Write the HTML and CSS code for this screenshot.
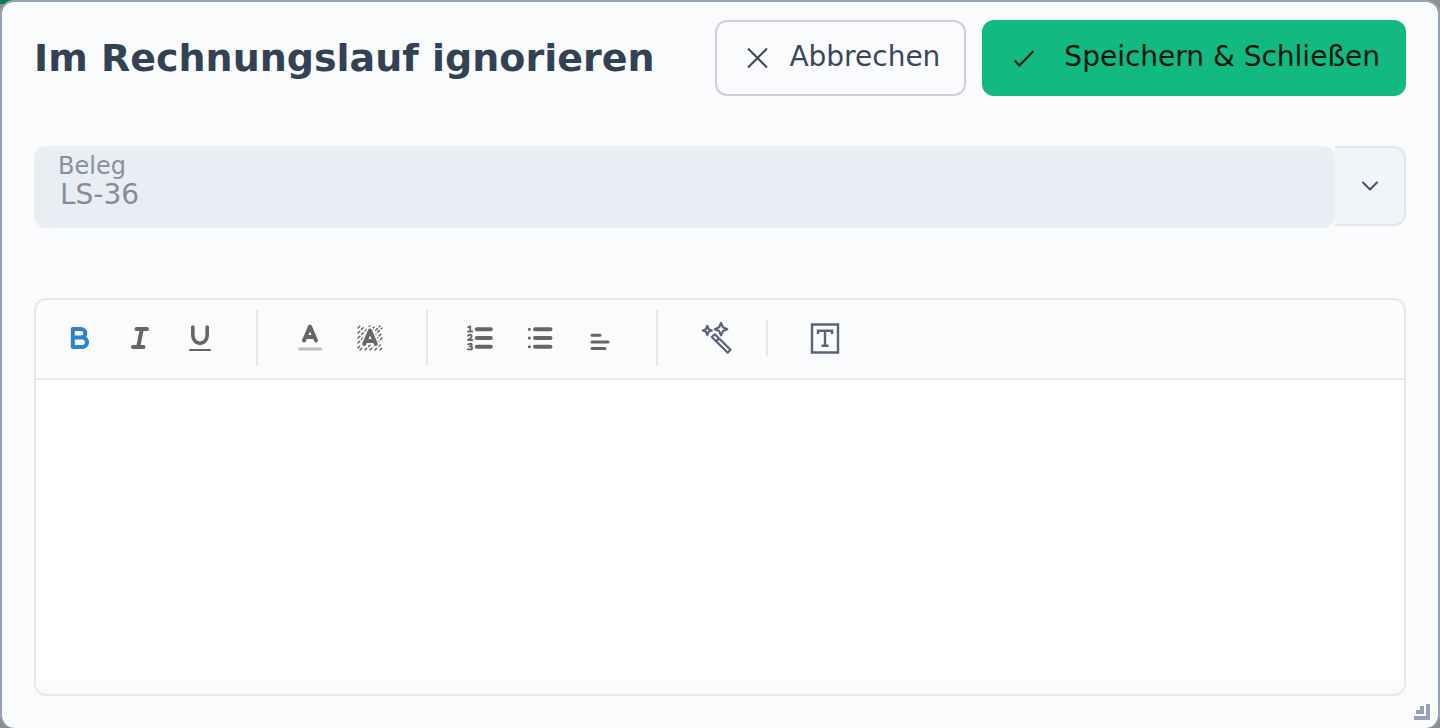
FILE: index.html
```html
<!DOCTYPE html>
<html lang="de">
<head>
<meta charset="utf-8">
<meta name="viewport" content="width=device-width, initial-scale=1">
<title>Im Rechnungslauf ignorieren</title>
<link rel="stylesheet" href="styles.css">
</head>
<body>
<main class="dialog">
  <header class="header">
    <h1 class="title">Im Rechnungslauf ignorieren</h1>
    <div class="actions">
      <button class="btn btn-cancel" type="button">
        <svg class="btn-icon" viewBox="0 0 32 32" aria-hidden="true"><path d="M7 6.500l19 19M26 6.500l-19 19"/></svg>
        Abbrechen
      </button>
      <button class="btn btn-save" type="button">
        <svg class="btn-icon" viewBox="0 0 32 32" aria-hidden="true"><path d="M6.500 18.500l5 5L25.500 9"/></svg>
        Speichern &amp; Schließen
      </button>
    </div>
  </header>

  <div class="combo">
    <div class="field">
      <label class="field-label" for="beleg">Beleg</label>
      <input class="field-input" id="beleg" type="text" value="LS-36" disabled>
    </div>
    <button class="combo-toggle" type="button" aria-label="Auswahl öffnen">
      <svg class="chevron" viewBox="0 0 20 20" aria-hidden="true"><path d="M3 6.500l7 7 7-7"/></svg>
    </button>
  </div>

  <section class="editor">
    <div class="toolbar" role="toolbar" aria-label="Formatierung">
      <div class="group">
        <button class="tool tool-active" type="button" aria-label="Fett">
          <svg class="tool-icon" viewBox="0 0 40 40"><path class="w4" d="M12.800 11h8.200a4.300 4.300 0 0 1 0 8.600h-8.200zM12.800 19.600h9.500a4.700 4.700 0 0 1 0 9.400h-9.500z"/></svg>
        </button>
        <button class="tool" type="button" aria-label="Kursiv">
          <svg class="tool-icon" viewBox="0 0 40 40"><path class="w4" d="M16.500 11h10.500M13 29h10.500M21.800 11l-3.600 18"/></svg>
        </button>
        <button class="tool" type="button" aria-label="Unterstrichen">
          <svg class="tool-icon" viewBox="0 0 40 40"><path class="u-stem" d="M12.800 9v8.500a7.200 7.900 0 0 0 14.400 0V9"/><path class="w2" d="M10 32h20"/></svg>
        </button>
      </div>
      <span class="divider"></span>
      <div class="group">
        <button class="tool" type="button" aria-label="Textfarbe">
          <svg class="tool-icon" viewBox="0 0 40 40"><path class="w4" d="M14 22.500l6-14 6 14M16 19h8"/><path class="w3 swatch" d="M9.500 31h21"/></svg>
        </button>
        <button class="tool" type="button" aria-label="Hintergrundfarbe">
          <svg class="tool-icon" viewBox="0 0 40 40">
            <path class="hatch" d="M8 10l2-2M8 15l7-7M8 20L20 8M8 25L25 8M8 30L30 8M10 32L32 10M15 32l17-17M20 32l12-12M25 32l7-7M30 32l2-2"/>
            <path class="halo" d="M14.200 26l5.800-13.500 5.800 13.500M16 23h8"/>
            <path class="w4" d="M14.200 26l5.800-13.500 5.800 13.500M16 23h8"/>
          </svg>
        </button>
      </div>
      <span class="divider"></span>
      <div class="group">
        <button class="tool" type="button" aria-label="Nummerierte Liste">
          <svg class="tool-icon" viewBox="0 0 40 40"><path class="w4" d="M16.800 11.200h14M16.800 20h14M16.800 28.800h14"/><path class="digit" d="M8.200 9.300l2-1V13.500M8 13.500h4.400M8 17.700q2-1.600 3.500-.4 1.200 1.600-3.500 4.700h4.400M8 26.300q3.700-1.300 3.800.6 0 1.500-2.300 1.500 2.700 0 2.700 1.800-.2 2.200-4.500 1"/></svg>
        </button>
        <button class="tool" type="button" aria-label="Aufzählung">
          <svg class="tool-icon" viewBox="0 0 40 40"><path class="w4" d="M15 11.200h15.500M15 20h15.500M15 28.800h15.500"/><path class="w3" d="M9.300 11.200h.1M9.300 20h.1M9.300 28.800h.1"/></svg>
        </button>
        <button class="tool" type="button" aria-label="Ausrichtung">
          <svg class="tool-icon" viewBox="0 0 40 40"><path class="w3" d="M12 17.300h8M12 24h16M12 30.500h13"/></svg>
        </button>
      </div>
      <span class="divider"></span>
      <div class="group group-extra">
        <button class="tool tool-extra" type="button" aria-label="Assistent">
          <svg class="tool-icon" viewBox="0 0 40 40"><path class="wand" d="M24 5l1.900 4.300L30.200 11.200l-4.300 1.900L24 17.400l-1.900-4.300-4.300-1.900 4.300-1.900zM10.300 8l1.300 3.200 3.200 1.300-3.200 1.300-1.300 3.200L9 13.800l-3.200-1.300L9 11.200zM14.800 19l3-2.700 15.700 15.500-2.800 2.900zM19 23.200l3-2.800"/></svg>
        </button>
        <span class="divider divider-short"></span>
        <button class="tool tool-extra" type="button" aria-label="Textbaustein">
          <svg class="tool-icon" viewBox="0 0 40 40"><path class="box" d="M7 6.500h26v28H7zM13 16v-3.200h14V16M20 13v14.800M16.500 27.800h7"/></svg>
        </button>
      </div>
    </div>
    <textarea class="editor-text" aria-label="Text"></textarea>
    <div class="editor-foot"></div>
  </section>
  <svg class="grip" viewBox="0 0 16 16" aria-hidden="true"><path d="M12 0h4v16H0v-4h12zM6 2h4v8H2V6h4z"/></svg>
</main>
</body>
</html>
```
FILE: styles.css
```css
* {
  box-sizing: border-box;
}

body {
  margin: 0;
  font-family: "DejaVu Sans", sans-serif;
  background: linear-gradient(90deg, #0f7a58 12px, #8b8d90 12px);
  background-size: 100% 4px;
  background-repeat: no-repeat;
  background-color: #8b8d90;
}

button,
input,
textarea {
  font: inherit;
  margin: 0;
}

.dialog {
  position: relative;
  display: flex;
  flex-direction: column;
  min-height: 100vh;
  padding: 18px 32px 32px;
  border: 2px solid #94a3b8;
  border-bottom: 0;
  border-radius: 14px;
  background: #fafbfd;
}

.header {
  display: flex;
  align-items: center;
  justify-content: space-between;
  gap: 16px;
}

.title {
  margin: 0;
  font-size: 38px;
  line-height: 48px;
  font-weight: 700;
  color: #334155;
  white-space: nowrap;
}

.actions {
  display: flex;
  gap: 16px;
}

.btn {
  display: flex;
  align-items: center;
  height: 76px;
  padding: 0 24px 2px;
  border: 2px solid;
  border-radius: 12px;
  font-size: 28px;
  line-height: 32px;
  white-space: nowrap;
}

.btn-cancel {
  gap: 16px;
  background: transparent;
  border-color: #cbd0da;
  color: #3a475b;
}

.btn-save {
  gap: 24px;
  background: #12b981;
  border-color: #12b981;
  color: #06150f;
}

.btn-icon {
  width: 32px;
  height: 32px;
  margin-top: 2px;
  fill: none;
  stroke: currentColor;
  stroke-width: 2;
}

.combo {
  display: flex;
  align-items: flex-start;
  margin-top: 50px;
}

.field {
  display: flex;
  flex: 1;
  flex-direction: column;
  height: 82px;
  padding: 6px 24px 0;
  border: 2px solid #eaeff3;
  border-left-width: 0;
  border-radius: 12px;
  background: #e9eef5;
}

.field-label {
  font-size: 24px;
  line-height: 24px;
  color: #89919c;
}

.field-input {
  width: 100%;
  height: 32px;
  padding: 0 2px;
  border: 0;
  background: transparent;
  font-size: 28px;
  color: #858c95;
}

.combo-toggle {
  display: flex;
  align-items: center;
  justify-content: center;
  width: 71px;
  height: 80px;
  padding: 0;
  border: 2px solid #e3e7ed;
  border-left: 0;
  border-radius: 0 12px 12px 0;
  background: #f1f4f8;
}

.chevron {
  width: 20px;
  height: 20px;
  fill: none;
  stroke: #475061;
  stroke-width: 2;
  stroke-linecap: round;
  stroke-linejoin: round;
}

.editor {
  display: flex;
  flex: 1;
  flex-direction: column;
  margin-top: 70px;
  border: 2px solid #e5e7eb;
  border-radius: 12px;
  overflow: hidden;
}

.toolbar {
  display: flex;
  align-items: center;
  height: 80px;
  padding: 0 14px 2px;
  border-bottom: 2px solid #e5e7eb;
}

.group {
  display: flex;
  align-items: center;
}

.group-extra {
  padding-left: 7px;
}

.tool {
  display: grid;
  place-items: center;
  width: 60px;
  height: 56px;
  padding: 0;
  border: 0;
  background: transparent;
  color: #666;
}

.tool-active {
  color: #3182ce;
}

.tool-extra {
  color: #5b6475;
}

.tool-icon {
  width: 40px;
  height: 40px;
  fill: none;
  stroke: currentColor;
  stroke-linecap: round;
  stroke-linejoin: round;
}

.w2 {
  stroke-width: 2;
}

.w3 {
  stroke-width: 3;
}

.w4 {
  stroke-width: 4;
}

.u-stem {
  stroke-width: 3.6;
}

.wand {
  stroke-width: 2.2;
}

.swatch {
  stroke: #bdbdbd;
}

.hatch {
  stroke-width: 1.5;
  stroke-dasharray: 2.4 2.6;
}

.halo {
  stroke: #fafbfd;
  stroke-width: 7;
}

.digit {
  stroke-width: 1.8;
}

.box {
  stroke-width: 2.4;
  stroke-linecap: butt;
  stroke-linejoin: miter;
}

.divider {
  width: 2px;
  height: 56px;
  margin: 0 22px 0 26px;
  background: #e5e7eb;
}

.divider-short {
  height: 36px;
  margin: 0 27px 0 19px;
}

.editor-text {
  flex: 1;
  width: 100%;
  min-height: 160px;
  padding: 16px;
  border: 0;
  background: #fff;
  outline: 0;
  resize: none;
  font-size: 28px;
  color: #334155;
}

.editor-foot {
  height: 14px;
}

.grip {
  position: absolute;
  right: 8px;
  bottom: 8px;
  width: 16px;
  height: 16px;
  fill: #94a3b8;
}
```
